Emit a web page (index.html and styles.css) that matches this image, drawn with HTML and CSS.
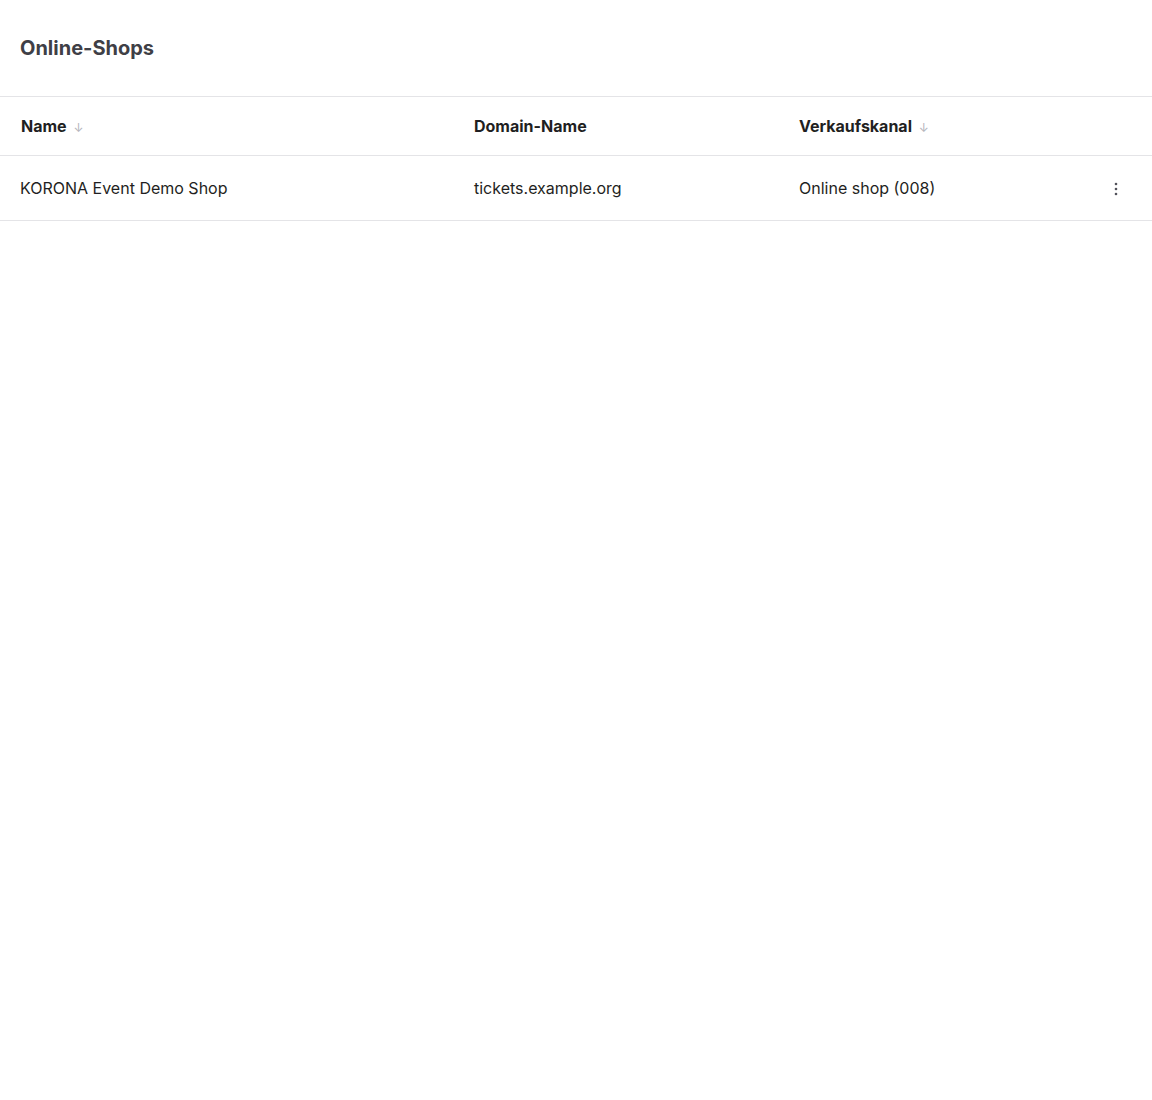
FILE: index.html
```html
<!DOCTYPE html>
<html lang="de">
<head>
    <meta charset="UTF-8">
    <meta name="viewport" content="width=device-width, initial-scale=1.0">
    <title>Online-Shops</title>
    <link rel="stylesheet" href="styles.css">
</head>
<body>
    <div class="page-header">
        <h1>Online-Shops</h1>
    </div>

    <table class="shop-table">
        <colgroup>
            <col class="col-name">
            <col class="col-domain">
            <col class="col-channel">
            <col class="col-actions">
        </colgroup>
        <thead>
            <tr>
                <th class="sortable">Name <span class="sort-arrow">&darr;</span></th>
                <th>Domain-Name</th>
                <th class="sortable">Verkaufskanal <span class="sort-arrow">&darr;</span></th>
                <th></th>
            </tr>
        </thead>
        <tbody>
            <tr>
                <td>KORONA Event Demo Shop</td>
                <td>tickets.example.org</td>
                <td>Online shop (008)</td>
                <td class="actions">
                    <button class="menu-btn" aria-label="Mehr">
                        <svg width="16" height="16" viewBox="0 0 16 16">
                            <circle cx="8" cy="3" r="1.3" fill="#52525b"/>
                            <circle cx="8" cy="8" r="1.3" fill="#52525b"/>
                            <circle cx="8" cy="13" r="1.3" fill="#52525b"/>
                        </svg>
                    </button>
                </td>
            </tr>
        </tbody>
    </table>
</body>
</html>
```

FILE: styles.css
```css
* {
    box-sizing: border-box;
    margin: 0;
    padding: 0;
}

body {
    font-family: Inter, 'Noto Sans', sans-serif;
    background: #ffffff;
    color: #1f1f22;
}

.page-header {
    height: 97px;
    display: flex;
    align-items: center;
    padding: 0 20px 1px;
    border-bottom: 1px solid #e4e4e7;
}

.page-header h1 {
    font-size: 20px;
    font-weight: 700;
    color: #3f3f46;
}

.shop-table {
    width: 100%;
    border-collapse: collapse;
    table-layout: fixed;
    font-size: 16px;
}

.col-name { width: 454px; }
.col-domain { width: 325px; }
.col-channel { width: auto; }
.col-actions { width: 76px; }

.shop-table th {
    height: 58px;
    text-align: left;
    font-weight: 700;
    padding: 1px 20px 0;
    border-bottom: 1px solid #e4e4e7;
}

.shop-table th:first-child {
    padding-left: 21px;
}

.shop-table td {
    height: 65px;
    padding: 0 20px;
    border-bottom: 1px solid #e4e4e7;
}

.sort-arrow {
    color: #b4b4bb;
    font-size: 12px;
    font-weight: 400;
    margin-left: 3px;
}

.actions {
    text-align: right;
}

.menu-btn {
    background: none;
    border: none;
    cursor: pointer;
    display: inline-flex;
    vertical-align: middle;
    margin-right: 8px;
}
```
